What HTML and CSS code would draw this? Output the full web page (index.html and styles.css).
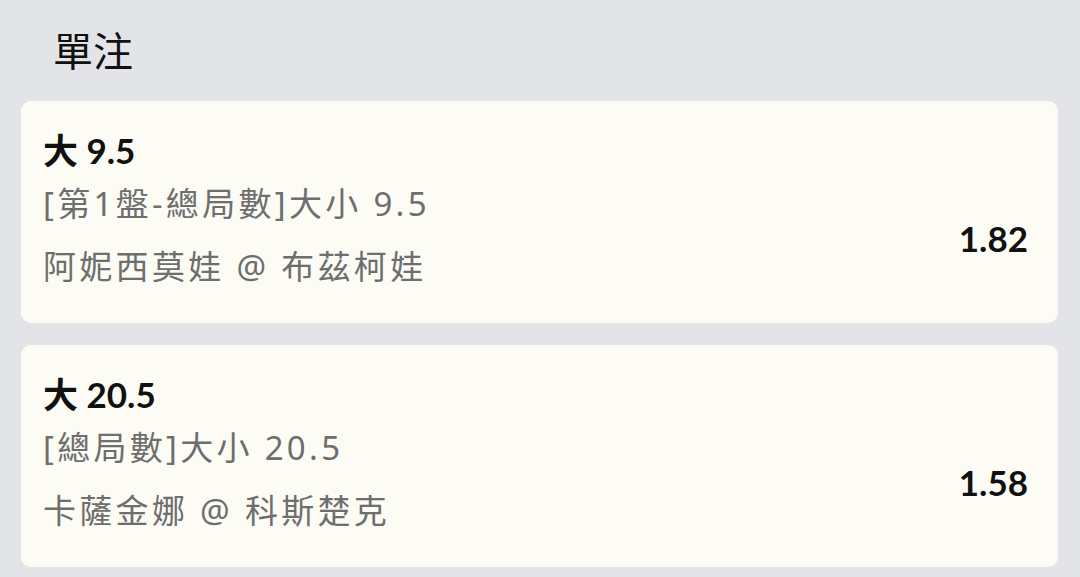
FILE: index.html
```html
<!DOCTYPE html>
<html lang="zh-Hant">
<head>
<meta charset="utf-8">
<link rel="stylesheet" href="styles.css">
</head>
<body>
<div class="page">
  <h1 class="heading">單注</h1>
  <div class="list">
    <div class="card">
      <div class="info">
        <div class="sel">大 9.5</div>
        <div class="market">[第1盤-總局數]大小 9.5</div>
        <div class="match">阿妮西莫娃 @ 布茲柯娃</div>
      </div>
      <div class="odds">1.82</div>
    </div>
    <div class="card">
      <div class="info">
        <div class="sel">大 20.5</div>
        <div class="market">[總局數]大小 20.5</div>
        <div class="match">卡薩金娜 @ 科斯楚克</div>
      </div>
      <div class="odds">1.58</div>
    </div>
  </div>
</div>
</body>
</html>
```

FILE: styles.css
```css
html, body {
  margin: 0;
  padding: 0;
  background: #e3e4e8;
}
.page {
  padding: 0 22px 0 21px;
  font-family: "Noto Sans", "Noto Sans CJK TC", sans-serif;
}
.heading {
  margin: 0;
  padding: 25px 0 0 32px;
  height: 75px;
  box-sizing: border-box;
  font-size: 40px;
  line-height: 48px;
  font-weight: 400;
  color: #111;
  font-family: "Noto Sans CJK TC", sans-serif;
}
.list {
  display: flex;
  flex-direction: column;
  gap: 22px;
  margin-top: 26px;
}
.card {
  background: #fcfcf4;
  border-radius: 10px;
  height: 222px;
  box-sizing: border-box;
  padding: 29px 30px 0 22px;
  display: flex;
}
.info {
  flex: 1;
  display: flex;
  flex-direction: column;
}
.sel {
  font-family: "Lato", "Noto Sans CJK TC", sans-serif;
  font-weight: 700;
  font-size: 35px;
  line-height: 40px;
  color: #111;
}
.market, .match {
  font-size: 33px;
  line-height: 50px;
  letter-spacing: 3.3px;
  color: #6e6e6e;
}
.market {
  margin-top: 9px;
}
.match {
  margin-top: 13px;
}
.odds {
  align-self: center;
  margin-top: 22px;
  font-family: "Lato", sans-serif;
  font-weight: 700;
  font-size: 35px;
  line-height: 40px;
  color: #111;
}
```
